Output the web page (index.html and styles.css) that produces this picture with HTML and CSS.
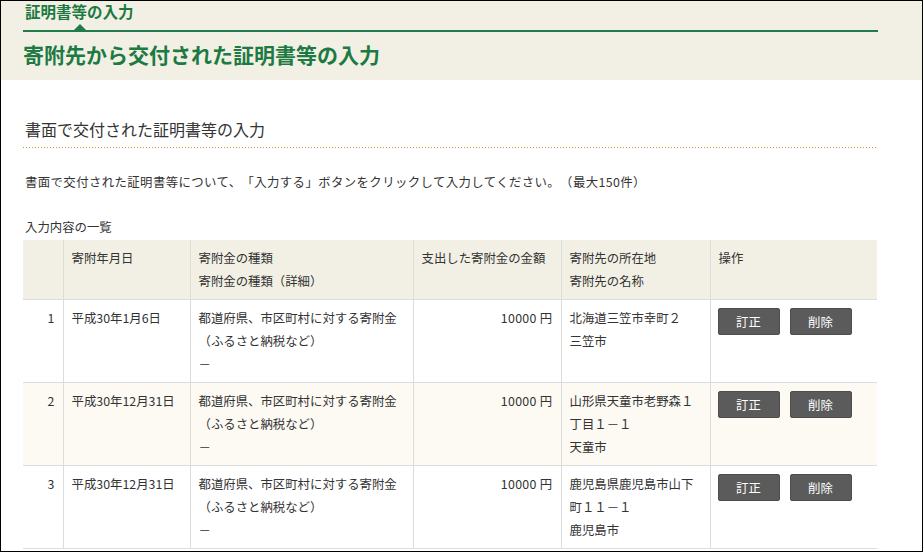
FILE: index.html
```html
<!DOCTYPE html>
<html lang="ja">
<head>
    <meta charset="UTF-8">
    <meta name="viewport" content="width=device-width, initial-scale=1.0">
    <title>証明書等の入力</title>
    <link rel="stylesheet" href="styles.css">
</head>
<body>

    <div class="frame">
        <div class="page-header">
            <div class="crumb">証明書等の入力<span class="crumb-mark"></span></div>
            <h1>寄附先から交付された証明書等の入力</h1>
        </div>

        <div class="content">
            <h2>書面で交付された証明書等の入力</h2>
            <p class="lead">書面で交付された証明書等について、「入力する」ボタンをクリックして入力してください。（最大150件）</p>

            <p class="caption">入力内容の一覧</p>
            <table class="list">
                <colgroup>
                    <col class="c-no">
                    <col class="c-date">
                    <col class="c-kind">
                    <col class="c-amount">
                    <col class="c-place">
                    <col class="c-ops">
                </colgroup>
                <thead>
                    <tr>
                        <th></th>
                        <th>寄附年月日</th>
                        <th>寄附金の種類<br>寄附金の種類（詳細）</th>
                        <th>支出した寄附金の金額</th>
                        <th>寄附先の所在地<br>寄附先の名称</th>
                        <th>操作</th>
                    </tr>
                </thead>
                <tbody>
                    <tr>
                        <td class="num">1</td>
                        <td>平成30年1月6日</td>
                        <td>都道府県、市区町村に対する寄附金<br>（ふるさと納税など）<br>－</td>
                        <td class="money">10000 円</td>
                        <td>北海道三笠市幸町２<br>三笠市</td>
                        <td class="ops"><button class="btn">訂正</button><button class="btn">削除</button></td>
                    </tr>
                    <tr class="alt">
                        <td class="num">2</td>
                        <td>平成30年12月31日</td>
                        <td>都道府県、市区町村に対する寄附金<br>（ふるさと納税など）<br>－</td>
                        <td class="money">10000 円</td>
                        <td>山形県天童市老野森１<br>丁目１－１<br>天童市</td>
                        <td class="ops"><button class="btn">訂正</button><button class="btn">削除</button></td>
                    </tr>
                    <tr>
                        <td class="num">3</td>
                        <td>平成30年12月31日</td>
                        <td>都道府県、市区町村に対する寄附金<br>（ふるさと納税など）<br>－</td>
                        <td class="money">10000 円</td>
                        <td>鹿児島県鹿児島市山下<br>町１１－１<br>鹿児島市</td>
                        <td class="ops"><button class="btn">訂正</button><button class="btn">削除</button></td>
                    </tr>
                </tbody>
            </table>
        </div>
    </div>

</body>
</html>
```

FILE: styles.css
```css
/* page frame */
body {
    margin: 0;
    font-family: "Noto Sans CJK JP", "Noto Sans", sans-serif;
    color: #333;
    background-color: #fff;
    text-spacing-trim: space-all;
}
.frame {
    width: 921px;
    height: 550px;
    border: 1px solid #000;
    overflow: hidden;
}

/* green header */
.page-header {
    background-color: #f2f0e5;
    padding: 0 44px 11px 22px;
}
.crumb {
    position: relative;
    font-size: 15.5px;
    font-weight: bold;
    color: #1c7a42;
    line-height: 20px;
    padding: 0 0 9px 2px;
    border-bottom: 2px solid #227b4a;
}
.crumb-mark {
    position: absolute;
    left: 51px;
    bottom: 0;
    width: 0;
    height: 0;
    border-left: 6px solid transparent;
    border-right: 6px solid transparent;
    border-bottom: 6px solid #227b4a;
}
.page-header h1 {
    margin: 7px 0 0 0;
    font-size: 21px;
    line-height: 30px;
    font-weight: bold;
    color: #1c7a42;
}

/* body */
.content {
    padding: 0 44px 0 22px;
}
.content h2 {
    margin: 37px 0 0;
    padding: 0 0 7px 2px;
    font-size: 16px;
    line-height: 24px;
    font-weight: normal;
    background: linear-gradient(to right, #d49a22 1px, transparent 1px) repeat-x left bottom / 3px 1px;
}
.lead {
    margin: 24px 0 0 2px;
    font-size: 12.4px;
    line-height: 20px;
    letter-spacing: 0.4px;
}
.caption {
    margin: 25px 0 3px 2px;
    font-size: 12.4px;
    line-height: 20px;
}

/* list table */
.list {
    width: 854px;
    border-collapse: collapse;
    table-layout: fixed;
    font-size: 12.4px;
}
.c-no { width: 40px; }
.c-date { width: 127px; }
.c-kind { width: 223px; }
.c-amount { width: 148px; }
.c-place { width: 149px; }
.c-ops { width: 167px; }
.list th, .list td {
    padding: 7px 8px 6px;
    line-height: 23px;
    text-align: left;
    vertical-align: top;
    font-weight: normal;
    white-space: nowrap;
    border-left: 1px solid #dcdcdc;
    border-bottom: 1px solid #dcdcdc;
}
.list th:first-child, .list td:first-child {
    border-left: none;
}
.list thead th {
    background-color: #f2f0e5;
}
.list tr.alt td {
    background-color: #fcfaf3;
}
.list td.num, .list td.money {
    text-align: right;
}
.list td.money {
    letter-spacing: 0.3px;
}
.list td.ops {
    padding-left: 7px;
}
.btn {
    width: 62px;
    height: 27px;
    margin: 1px 10px 0 0;
    padding: 0;
    border: 1px solid #4d4d4d;
    border-radius: 2px;
    background-color: #5b5b5b;
    color: #fff;
    font-family: "Noto Sans CJK JP", "Noto Sans", sans-serif;
    font-size: 12.4px;
    vertical-align: top;
    cursor: pointer;
}
```
